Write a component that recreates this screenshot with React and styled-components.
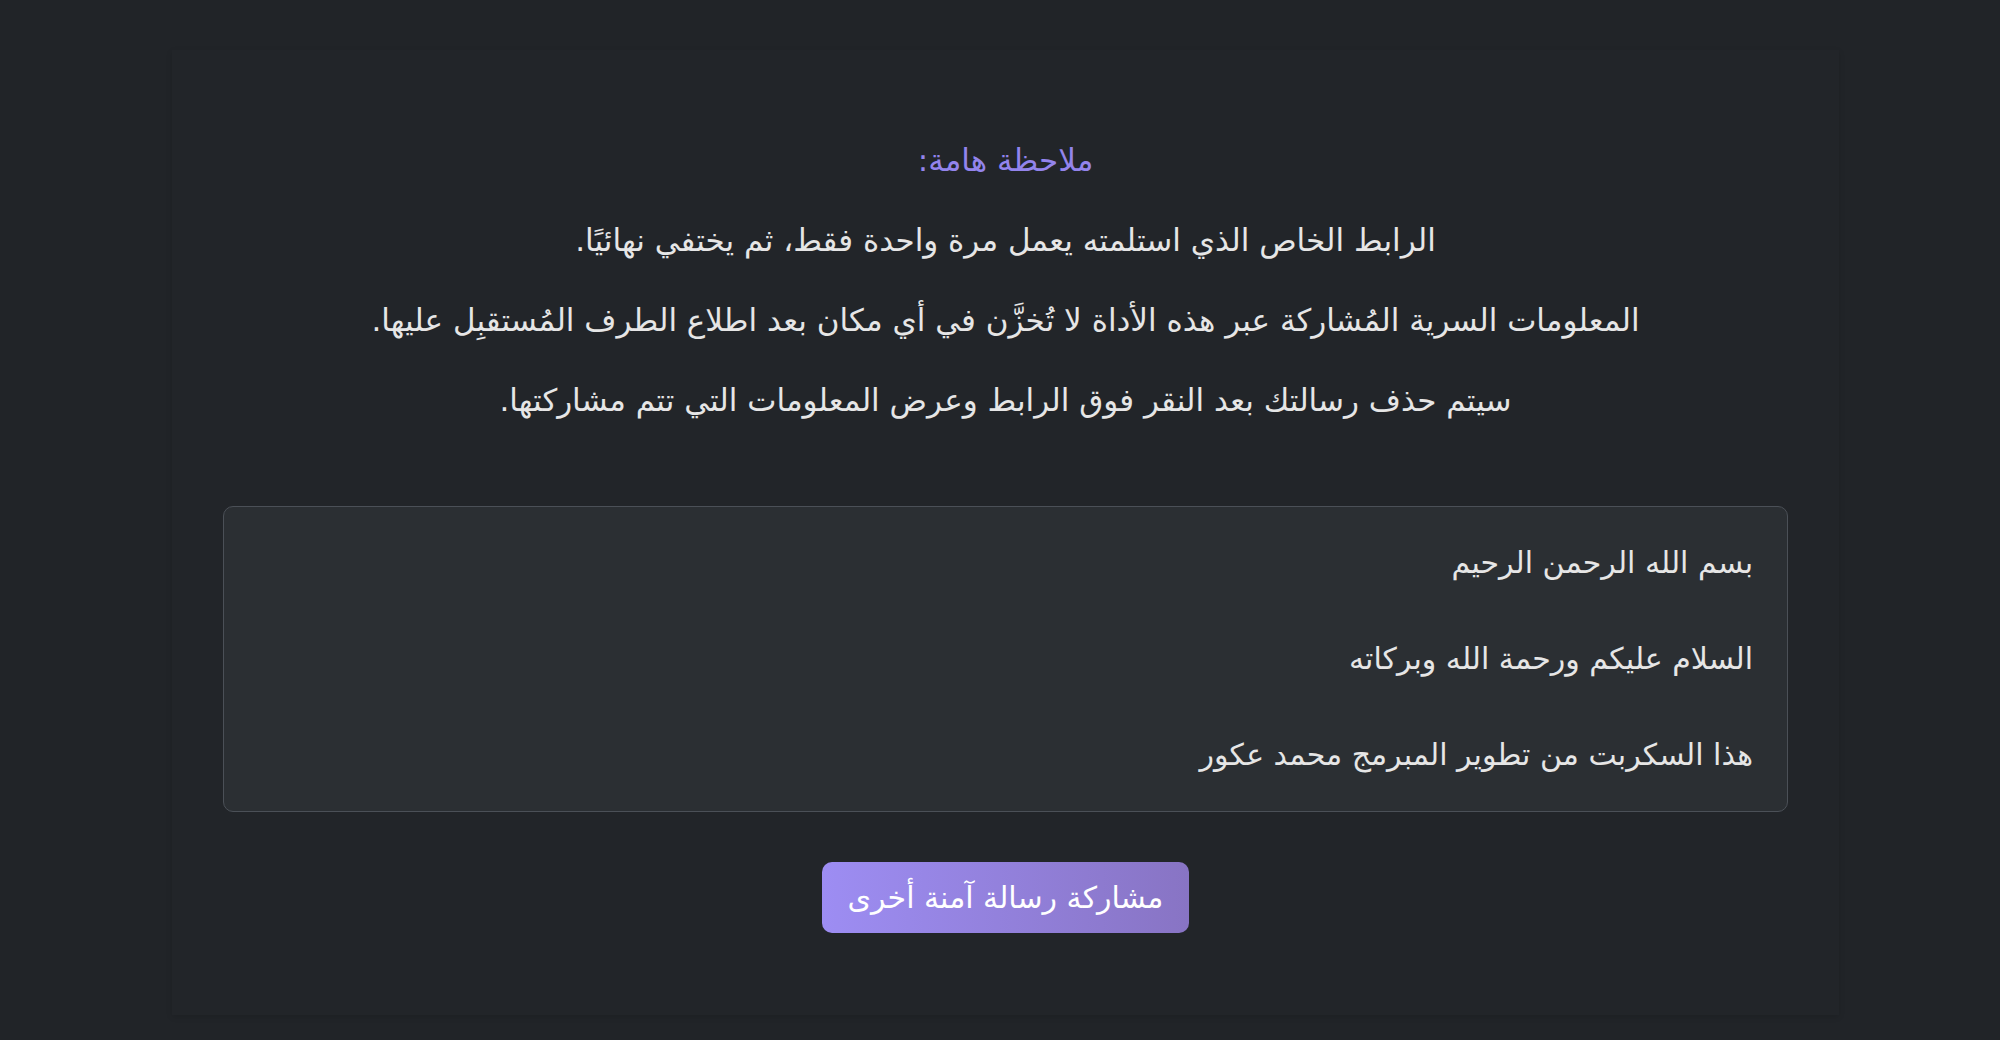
import styled, { createGlobalStyle } from 'styled-components'

const Global = createGlobalStyle`
  html, body {
    margin: 0;
    padding: 0;
    background: #212428;
  }
  body {
    font-family: "DejaVu Sans", "Noto Sans", sans-serif;
  }
`

const Page = styled.div`
  min-height: 1040px;
  padding: 50px 0 0 172px;
  box-sizing: border-box;
`

const Card = styled.div`
  width: 1667px;
  box-sizing: border-box;
  padding: 51px;
  background: #222529;
  box-shadow: 0 2px 6px rgba(0, 0, 0, 0.12);
  display: flex;
  flex-direction: column;
  align-items: center;
  direction: rtl;
`

const Notice = styled.div`
  display: flex;
  flex-direction: column;
  align-items: center;
  gap: 38px;
  margin-top: 38px;
`

const NoticeTitle = styled.h3`
  margin: 0;
  font-size: 31px;
  font-weight: 400;
  line-height: 42px;
  color: #9384ec;
`

const NoticeLine = styled.p`
  margin: 0;
  font-size: 31px;
  line-height: 42px;
  color: #e6e6e6;
  text-align: center;
`

const MessageBox = styled.div`
  width: 100%;
  box-sizing: border-box;
  margin-top: 85px;
  padding: 32px 34px;
  background: #2b2f33;
  border: 1px solid #4b5057;
  border-radius: 10px;
  color: #e6e6e6;
  font-size: 30px;
  line-height: 48px;
  text-align: right;
  white-space: pre-wrap;
`

const Button = styled.button`
  margin-top: 50px;
  margin-bottom: 31px;
  height: 71px;
  padding: 0 26px;
  border: none;
  border-radius: 10px;
  background: linear-gradient(90deg, #9d8df3 0%, #8874c4 100%);
  color: #ffffff;
  font-family: inherit;
  font-size: 30px;
  cursor: pointer;
`

const message = 'بسم الله الرحمن الرحيم\n\nالسلام عليكم ورحمة الله وبركاته\n\nهذا السكربت من تطوير المبرمج محمد عكور'

export default function App() {
  return (
    <Page>
      <Global />
      <Card>
        <Notice>
          <NoticeTitle>ملاحظة هامة:</NoticeTitle>
          <NoticeLine>الرابط الخاص الذي استلمته يعمل مرة واحدة فقط، ثم يختفي نهائيًا.</NoticeLine>
          <NoticeLine>المعلومات السرية المُشاركة عبر هذه الأداة لا تُخزَّن في أي مكان بعد اطلاع الطرف المُستقبِل عليها.</NoticeLine>
          <NoticeLine>سيتم حذف رسالتك بعد النقر فوق الرابط وعرض المعلومات التي تتم مشاركتها.</NoticeLine>
        </Notice>
        <MessageBox>{message}</MessageBox>
        <Button>مشاركة رسالة آمنة أخرى</Button>
      </Card>
    </Page>
  )
}
